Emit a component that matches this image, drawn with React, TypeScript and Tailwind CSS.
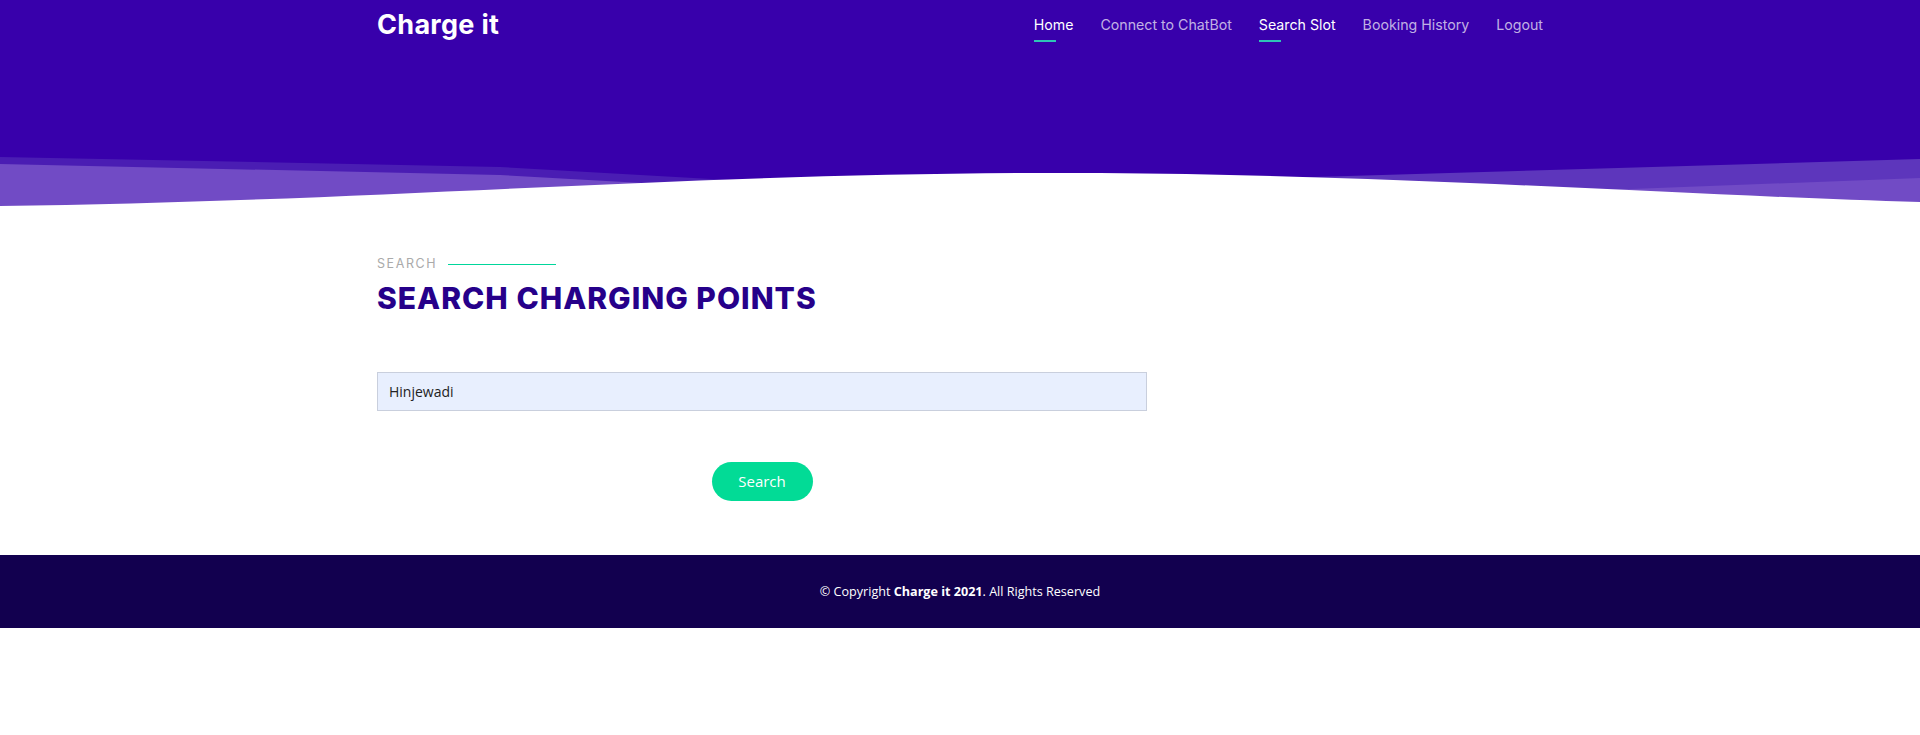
import { useState } from "react";

const navLinks = [
  { label: "Home", active: true },
  { label: "Connect to ChatBot", active: false },
  { label: "Search Slot", active: true },
  { label: "Booking History", active: false },
  { label: "Logout", active: false },
];

function Wave() {
  // 装飾の波形（ヒーロー下端）
  return (
    <svg
      className="absolute left-0 bottom-0 w-full h-[70px]"
      viewBox="0 140 1920 70"
      preserveAspectRatio="none"
    >
      <path d="M0,157 L500,167 L780,183 L780,210 L0,210 Z" fill="#4a1db3" />
      <path d="M0,164 L500,175 L660,184 L660,210 L0,210 Z" fill="#714bc5" />
      <path d="M1280,178 L1920,159 L1920,210 L1280,210 Z" fill="#5d36bc" />
      <path d="M1580,191 L1920,178 L1920,210 L1580,210 Z" fill="#714bc5" />
      <path
        d="M0,206 C400,201 700,171 1100,173 C1400,175 1700,196 1920,202 L1920,210 L0,210 Z"
        fill="#ffffff"
      />
    </svg>
  );
}

export default function App() {
  const [location, setLocation] = useState("Hinjewadi");

  return (
    <div className="min-h-[735px] bg-white font-['Open_Sans',sans-serif]">
      <header className="relative h-[210px] bg-[#3800ab] overflow-hidden">
        <div className="w-[1166px] mx-auto flex items-center justify-between h-[50px]">
          <a
            href="#"
            className="text-white text-[27px] font-bold leading-none tracking-[0.3px] font-['Inter',sans-serif] -mt-[1px]"
          >
            Charge it
          </a>
          <nav className="flex items-center gap-[27px] font-['Inter',sans-serif] text-[14.2px]">
            {navLinks.map((link) => (
              <a
                key={link.label}
                href="#"
                className={`relative leading-[22px] ${
                  link.active ? "text-white" : "text-white/70"
                }`}
              >
                {link.label}
                {link.active && (
                  <span className="absolute left-0 top-full mt-[4px] w-[22px] h-[2px] bg-[#2ec4b6]" />
                )}
              </a>
            ))}
          </nav>
        </div>
        <Wave />
      </header>

      <main className="w-[1166px] mx-auto pt-[44px] pb-[54px]">
        <div className="flex items-center gap-[11px]">
          <span className="text-[12.5px] leading-[20px] tracking-[1.6px] text-[#aaaaaa] font-['Inter',sans-serif] uppercase">
            Search
          </span>
          <span className="w-[108px] h-px bg-[#00d69b]" />
        </div>
        <h1 className="mt-[6px] text-[30px] leading-[1.2] font-extrabold tracking-[1px] text-[#26008a] font-['Inter',sans-serif] uppercase">
          Search Charging Points
        </h1>

        <form
          className="w-[770px] mt-[56px] flex flex-col items-center"
          onSubmit={(e) => e.preventDefault()}
        >
          <input
            type="text"
            value={location}
            onChange={(e) => setLocation(e.target.value)}
            className="w-full h-[39px] px-[11px] bg-[#e8effe] border border-[#c9cfdd] text-[14px] text-[#222] outline-none"
          />
          <button
            type="submit"
            className="mt-[51px] w-[101px] h-[39px] rounded-full bg-[#02db96] text-white text-[15px]"
          >
            Search
          </button>
        </form>
      </main>

      <footer className="h-[73px] bg-[#12004f] flex items-center justify-center pt-[2px]">
        <p className="text-white text-[12.6px]">
          © Copyright <strong className="font-bold">Charge it 2021</strong>. All
          Rights Reserved
        </p>
      </footer>
    </div>
  );
}
